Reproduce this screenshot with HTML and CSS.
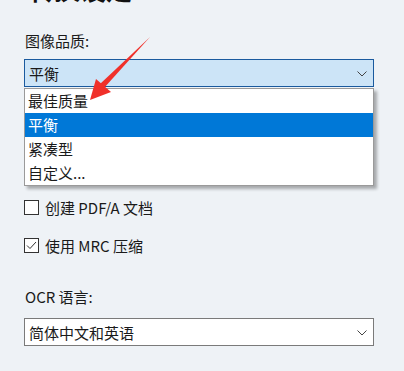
FILE: index.html
```html
<!DOCTYPE html>
<html lang="zh-CN">
<head>
    <meta charset="UTF-8">
    <meta name="viewport" content="width=device-width, initial-scale=1.0">
    <title>转换设定</title>
    <link rel="stylesheet" href="styles.css">
</head>
<body>
    <div class="panel">
        <h1 class="title">转换设定</h1>
        <div class="label">图像品质:</div>
        <div class="combo-wrap">
            <div class="combo open">
                <span>平衡</span>
                <svg class="chev" width="10" height="6" viewBox="0 0 10 6"><path d="M0.5 0.5 L5 5 L9.5 0.5" fill="none" stroke="#444" stroke-width="1"/></svg>
            </div>
            <ul class="list">
                <li>最佳质量</li>
                <li class="sel">平衡</li>
                <li>紧凑型</li>
                <li>自定义...</li>
            </ul>
        </div>
        <label class="check first"><span class="box"></span>创建 PDF/A 文档</label>
        <label class="check"><span class="box"><svg width="13" height="13" viewBox="0 0 13 13"><path d="M2 6.5 L5 9.5 L11 3" fill="none" stroke="#333" stroke-width="1"/></svg></span>使用 MRC 压缩</label>
        <div class="label ocr">OCR 语言:</div>
        <div class="combo">
            <span>简体中文和英语</span>
            <svg class="chev" width="10" height="6" viewBox="0 0 10 6"><path d="M0.5 0.5 L5 5 L9.5 0.5" fill="none" stroke="#444" stroke-width="1"/></svg>
        </div>
    </div>
    <svg class="arrow" width="404" height="371" viewBox="0 0 404 371">
        <path d="M150 37 L104 88 L100 84 Z" fill="#f0302a"/>
        <path d="M90 100 L96 79 L111 92 Z" fill="#f0302a"/>
    </svg>
</body>
</html>
```

FILE: styles.css
```css
body {
    margin: 0;
    background: #eef2f6;
    font-family: "Noto Sans CJK SC", "Noto Sans", sans-serif;
    color: #1a1a1a;
    width: 404px;
    height: 371px;
    overflow: hidden;
    position: relative;
}
.panel {
    display: flow-root;
    padding: 0 30px 0 24px;
}
.title {
    margin: -27px 0 0 4px;
    font-size: 26px;
    font-weight: bold;
    line-height: 32px;
    color: #111;
}
.label {
    font-size: 15px;
    line-height: 20px;
    margin-top: 26px;
    padding-left: 1px;
}
.combo-wrap {
    position: relative;
    margin-top: 8px;
}
.combo {
    height: 26px;
    border: 1px solid #7a7a7a;
    background: #fff;
    display: flex;
    align-items: center;
    justify-content: space-between;
    padding: 0 6px 0 4px;
    font-size: 15px;
}
.combo.open {
    background: #cce4f7;
    border-color: #1a5a9e;
}
.chev { margin-top: 1px; }
.list {
    position: absolute;
    left: 0;
    right: 0;
    top: 29px;
    margin: 0;
    padding: 0;
    list-style: none;
    background: #fff;
    border: 1px solid #9a9a9a;
    box-shadow: 3px 3px 3px rgba(0, 0, 0, 0.3);
    font-size: 15px;
}
.list li {
    height: 24px;
    line-height: 24px;
    padding-left: 3px;
}
.list li.sel {
    background: #0078d7;
    color: #fff;
}
.check {
    display: flex;
    align-items: center;
    gap: 6px;
    font-size: 15px;
    height: 16px;
    margin-top: 22px;
}
.check.first { margin-top: 112px; }
.box {
    width: 13px;
    height: 13px;
    border: 1px solid #333;
    background: #fff;
    display: flex;
}
.ocr { margin-top: 34px; }
.ocr + .combo { margin-top: 11px; }
.arrow {
    position: absolute;
    left: 0;
    top: 0;
}
```
